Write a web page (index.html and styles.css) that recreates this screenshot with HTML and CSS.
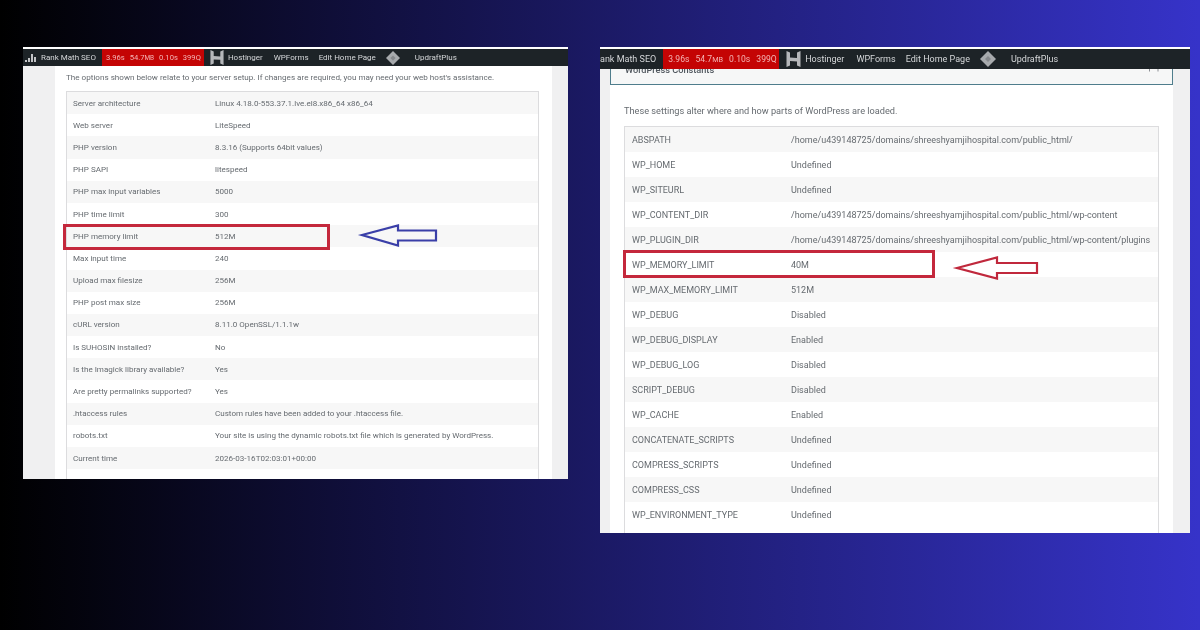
FILE: index.html
```html
<!DOCTYPE html>
<html lang="en">

<head>
    <meta charset="UTF-8">
    <meta name="viewport" content="width=device-width, initial-scale=1.0">
    <title>PHP memory limit</title>
    <link rel="stylesheet" href="styles.css">
</head>

<body>
    <main class="stage">
        <section class="shot shot--server">
            <nav class="bar">
                <svg class="bar__chart" viewBox="0 0 12 10"><path d="M0 7h2v2H0zM3 5h2v4H3zM6 1h2v8H6zM9 4h2v5H9z" fill="#c3c4c7"/></svg>
                <span class="bar__item">Rank Math SEO</span>
                <span class="bar__stats"><span>3.96s</span><span>54.7<small>MB</small></span><span>0.10s</span><span>399Q</span></span>
                <svg class="bar__host" viewBox="0 0 14 16"><path d="M0 0l3.500 1.500v5l7 .5V1.500L14 0v8.500H0zM0 8.500h14V16l-3.500-1.500V10.500l-7-.5v4.500L0 16z" fill="#b5b7ba"/></svg>
                <span class="bar__item bar__item--host">Hostinger</span>
                <span class="bar__item bar__item--forms">WPForms</span>
                <span class="bar__item bar__item--edit">Edit Home Page</span>
                <svg class="bar__diamond" viewBox="0 0 16 16"><path d="M8 0l8 8-8 8-8-8z" fill="#a7aaad"/><path d="M8 5l3 3-3 3-3-3z" fill="#85888c"/></svg>
                <span class="bar__item bar__item--updraft">UpdraftPlus</span>
            </nav>
            <div class="page">
                <div class="content">
                    <p class="intro">The options shown below relate to your server setup. If changes are required, you may need your web host's assistance.</p>
                    <div class="table">
                        <div class="row"><span>Server architecture</span><span>Linux 4.18.0-553.37.1.lve.el8.x86_64 x86_64</span></div>
                        <div class="row"><span>Web server</span><span>LiteSpeed</span></div>
                        <div class="row"><span>PHP version</span><span>8.3.16 (Supports 64bit values)</span></div>
                        <div class="row"><span>PHP SAPI</span><span>litespeed</span></div>
                        <div class="row"><span>PHP max input variables</span><span>5000</span></div>
                        <div class="row"><span>PHP time limit</span><span>300</span></div>
                        <div class="row"><span>PHP memory limit</span><span>512M</span></div>
                        <div class="row"><span>Max input time</span><span>240</span></div>
                        <div class="row"><span>Upload max filesize</span><span>256M</span></div>
                        <div class="row"><span>PHP post max size</span><span>256M</span></div>
                        <div class="row"><span>cURL version</span><span>8.11.0 OpenSSL/1.1.1w</span></div>
                        <div class="row"><span>Is SUHOSIN installed?</span><span>No</span></div>
                        <div class="row"><span>Is the Imagick library available?</span><span>Yes</span></div>
                        <div class="row"><span>Are pretty permalinks supported?</span><span>Yes</span></div>
                        <div class="row"><span>.htaccess rules</span><span>Custom rules have been added to your .htaccess file.</span></div>
                        <div class="row"><span>robots.txt</span><span>Your site is using the dynamic robots.txt file which is generated by WordPress.</span></div>
                        <div class="row"><span>Current time</span><span>2026-03-16T02:03:01+00:00</span></div>
                    </div>
                </div>
            </div>
            <div class="mark mark--server"></div>
            <svg class="arrow arrow--server" viewBox="0 0 78 24"><path d="M2 11L38 1.500V6.500H76V16.500H38V21.500Z" fill="none" stroke="#3a3fa8" stroke-width="2.200"/></svg>
        </section>

        <section class="shot shot--constants">
            <nav class="bar">
                <span class="bar__item">ank Math SEO</span>
                <span class="bar__stats"><span>3.96s</span><span>54.7<small>MB</small></span><span>0.10s</span><span>399Q</span></span>
                <svg class="bar__host" viewBox="0 0 14 16"><path d="M0 0l3.500 1.500v5l7 .5V1.500L14 0v8.500H0zM0 8.500h14V16l-3.500-1.500V10.500l-7-.5v4.500L0 16z" fill="#b5b7ba"/></svg>
                <span class="bar__item bar__item--host">Hostinger</span>
                <span class="bar__item bar__item--forms">WPForms</span>
                <span class="bar__item bar__item--edit">Edit Home Page</span>
                <svg class="bar__diamond" viewBox="0 0 16 16"><path d="M8 0l8 8-8 8-8-8z" fill="#a7aaad"/><path d="M8 5l3 3-3 3-3-3z" fill="#85888c"/></svg>
                <span class="bar__item bar__item--updraft">UpdraftPlus</span>
            </nav>
            <div class="page">
                <div class="content">
                    <h2 class="panel">WordPress Constants
                        <svg class="panel__toggle" viewBox="0 0 10 3"><path d="M.5 0v2.500M9 0v2.500" stroke="#8c8f94" fill="none"/></svg>
                    </h2>
                    <p class="intro">These settings alter where and how parts of WordPress are loaded.</p>
                    <div class="table">
                        <div class="row"><span>ABSPATH</span><span>/home/u439148725/domains/shreeshyamjihospital.com/public_html/</span></div>
                        <div class="row"><span>WP_HOME</span><span>Undefined</span></div>
                        <div class="row"><span>WP_SITEURL</span><span>Undefined</span></div>
                        <div class="row"><span>WP_CONTENT_DIR</span><span>/home/u439148725/domains/shreeshyamjihospital.com/public_html/wp-content</span></div>
                        <div class="row"><span>WP_PLUGIN_DIR</span><span>/home/u439148725/domains/shreeshyamjihospital.com/public_html/wp-content/plugins</span></div>
                        <div class="row"><span>WP_MEMORY_LIMIT</span><span>40M</span></div>
                        <div class="row"><span>WP_MAX_MEMORY_LIMIT</span><span>512M</span></div>
                        <div class="row"><span>WP_DEBUG</span><span>Disabled</span></div>
                        <div class="row"><span>WP_DEBUG_DISPLAY</span><span>Enabled</span></div>
                        <div class="row"><span>WP_DEBUG_LOG</span><span>Disabled</span></div>
                        <div class="row"><span>SCRIPT_DEBUG</span><span>Disabled</span></div>
                        <div class="row"><span>WP_CACHE</span><span>Enabled</span></div>
                        <div class="row"><span>CONCATENATE_SCRIPTS</span><span>Undefined</span></div>
                        <div class="row"><span>COMPRESS_SCRIPTS</span><span>Undefined</span></div>
                        <div class="row"><span>COMPRESS_CSS</span><span>Undefined</span></div>
                        <div class="row"><span>WP_ENVIRONMENT_TYPE</span><span>Undefined</span></div>
                    </div>
                </div>
            </div>
            <div class="mark mark--constants"></div>
            <svg class="arrow arrow--constants" viewBox="0 0 82 24"><path d="M1 12L41 1.500V7H81V17H41V22.500Z" fill="none" stroke="#c0283c" stroke-width="2.200"/></svg>
        </section>
    </main>
</body>
</html>
```

FILE: styles.css
```css
* {
    box-sizing: border-box;
}

html,
body {
    margin: 0;
    height: 100%;
}

body {
    overflow: hidden;
    background-color: #000;
    background-image: linear-gradient(90deg, #000 0%, #3633c9 100%);
    font-family: Roboto, "Open Sans", sans-serif;
}

.stage {
    display: flex;
    align-items: flex-start;
    gap: 32px;
    padding: 47px 0 0 23px;
}

.shot {
    position: relative;
    flex: none;
    display: flex;
    flex-direction: column;
    overflow: hidden;
    padding-top: 2px;
    background-color: #fff;
    filter: blur(.35px);
}

.shot--server {
    width: 545px;
    height: 432px;
    font-size: 8.05px;
}

.shot--constants {
    width: 590px;
    height: 486px;
    font-size: 9px;
}

/* admin bar */
.bar {
    flex: none;
    display: flex;
    align-items: center;
    background-color: #1d2327;
    color: #d5d7d9;
    white-space: nowrap;
}

.shot--server .bar {
    height: 17px;
    font-size: 8px;
}

.shot--constants .bar {
    height: 20px;
    font-size: 9px;
}

.bar__chart {
    width: 12px;
    height: 10px;
    margin: 0 4px 0 2px;
}

.bar__stats {
    flex: none;
    display: flex;
    align-items: center;
    height: 100%;
    background-color: #c40404;
    color: #f3b4b4;
}

.shot--server .bar__stats {
    width: 102px;
    gap: 5px;
    margin-left: 6px;
    padding-left: 4px;
    font-size: 7.6px;
}

.shot--constants .bar__stats {
    width: 116px;
    gap: 6px;
    margin-left: 7px;
    padding-left: 5px;
    font-size: 8.6px;
}

.bar__stats small {
    font-size: .85em;
}

.bar__host {
    flex: none;
}

.shot--server .bar__host {
    width: 14px;
    height: 15px;
    margin: 0 4px 0 6px;
}

.shot--constants .bar__host {
    width: 15px;
    height: 16px;
    margin: 0 4px 0 7px;
}

.bar__diamond {
    flex: none;
}

.shot--server .bar__diamond {
    width: 14px;
    height: 14px;
    margin-left: 10px;
}

.shot--constants .bar__diamond {
    width: 16px;
    height: 16px;
    margin-left: 10px;
}

.bar__item--forms {
    margin-left: 11px;
}

.shot--constants .bar__item--forms {
    margin-left: 12px;
}

.bar__item--edit {
    margin-left: 10px;
}

.bar__item--updraft {
    margin-left: 15px;
}

/* page under the bar */
.page {
    flex: 1;
    min-height: 0;
    background-color: #f0f0f1;
}

.shot--server .page {
    padding: 0 16px 0 32px;
}

.shot--constants .page {
    padding: 0 17px 0 10px;
}

.content {
    height: 100%;
    overflow: hidden;
    background-color: #fff;
    color: #666b70;
}

.shot--server .content {
    padding: 0 13px 0 11px;
}

.shot--constants .content {
    padding: 0 14px 0 14px;
}

.panel {
    position: relative;
    height: 16px;
    margin: 0 -14px;
    padding-left: 14px;
    border: 1px solid #4f7d8c;
    border-top: 0;
    background-color: #f6f7f7;
    color: #50575e;
    font-size: 9.2px;
    font-weight: 500;
    line-height: 2px;
}

.panel__toggle {
    position: absolute;
    top: 0;
    right: 13px;
    width: 10px;
    height: 3px;
}

.intro {
    margin: 0;
}

.shot--server .intro {
    padding: 6px 0 8px;
    font-size: 8.1px;
    line-height: 11px;
}

.shot--constants .intro {
    padding: 20px 0 9px;
    font-size: 9.2px;
    line-height: 12px;
}

.table {
    height: 100%;
    border: 1px solid #dcdcde;
    border-bottom: 0;
}

.row {
    display: grid;
    align-items: center;
    white-space: nowrap;
}

.row:nth-child(odd) {
    background-color: #f7f7f7;
}

.shot--server .row {
    grid-template-columns: 142px 1fr;
    height: 22.2px;
    padding-left: 6px;
}

.shot--constants .row {
    grid-template-columns: 159px 1fr;
    height: 25px;
    padding-left: 7px;
}

/* red boxes and arrows drawn over the capture */
.mark {
    position: absolute;
    border: 3px solid #c4283c;
}

.mark--server {
    left: 40px;
    top: 177px;
    width: 267px;
    height: 26px;
}

.mark--constants {
    left: 23px;
    top: 203px;
    width: 312px;
    height: 28px;
}

.arrow {
    position: absolute;
    height: 24px;
    overflow: visible;
}

.arrow--server {
    left: 337px;
    top: 177px;
    width: 78px;
}

.arrow--constants {
    left: 356px;
    top: 209px;
    width: 82px;
}
```
